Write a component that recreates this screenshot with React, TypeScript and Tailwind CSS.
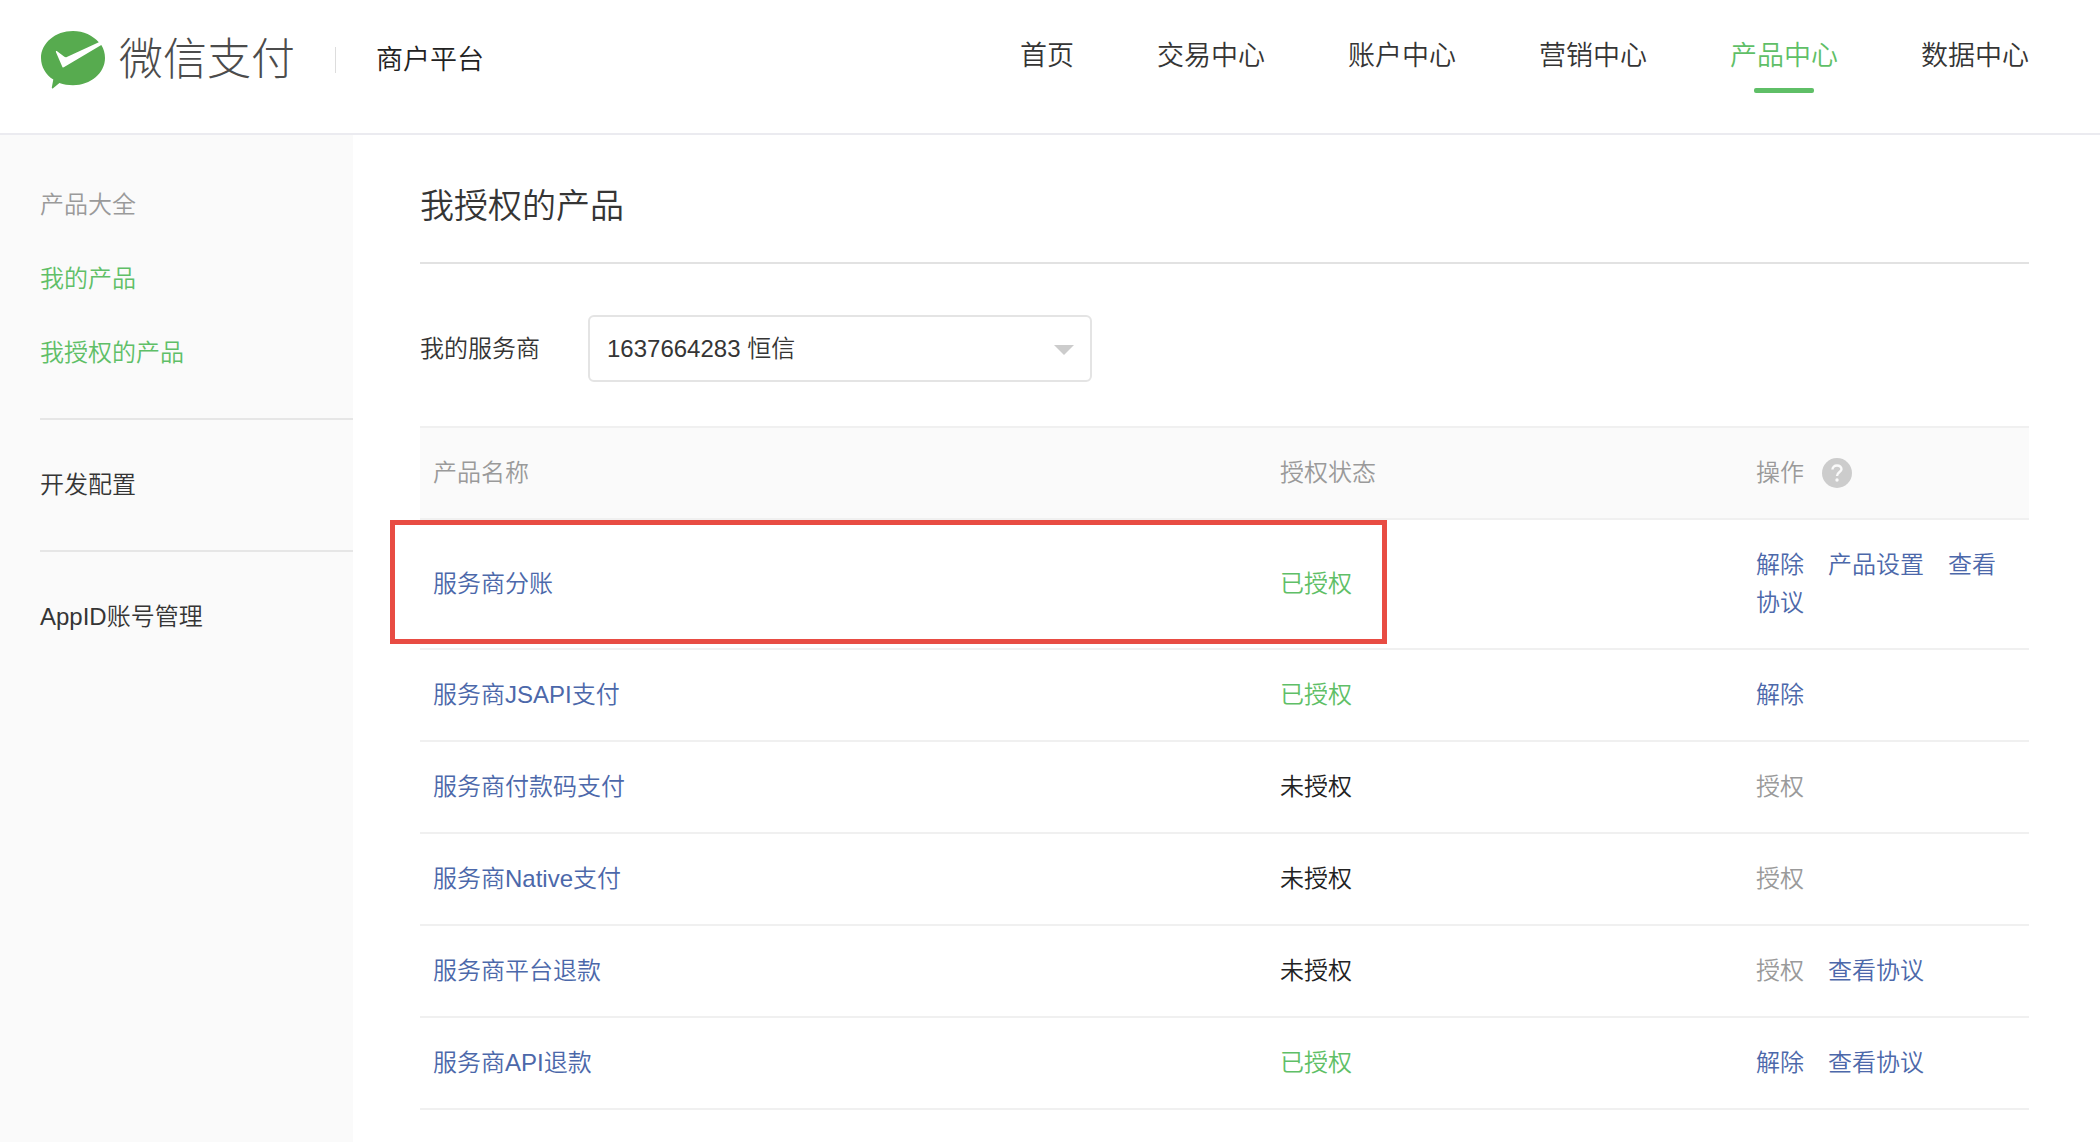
import { useState } from 'react';

type Action = { label: string; disabled?: boolean };

type Product = {
  name: string;
  authorized: boolean;
  actions: Action[];
  highlighted?: boolean;
};

const navItems = ['首页', '交易中心', '账户中心', '营销中心', '产品中心', '数据中心'];

const products: Product[] = [
  {
    name: '服务商分账',
    authorized: true,
    actions: [{ label: '解除' }, { label: '产品设置' }, { label: '查看协议' }],
    highlighted: true,
  },
  { name: '服务商JSAPI支付', authorized: true, actions: [{ label: '解除' }] },
  { name: '服务商付款码支付', authorized: false, actions: [{ label: '授权', disabled: true }] },
  { name: '服务商Native支付', authorized: false, actions: [{ label: '授权', disabled: true }] },
  {
    name: '服务商平台退款',
    authorized: false,
    actions: [{ label: '授权', disabled: true }, { label: '查看协议' }],
  },
  {
    name: '服务商API退款',
    authorized: true,
    actions: [{ label: '解除' }, { label: '查看协议' }],
  },
];

function Logo() {
  return (
    <svg width="65" height="58" viewBox="0 0 65 58" aria-hidden="true">
      <path
        d="M32 0C14.300 0 0 12.100 0 27c0 9 4.800 16.800 12.300 21.600L10.800 56.500c-.1 1 .6 1.300 1.300.8L18.400 52c4.200 1.500 8.900 2.200 13.600 2.200 17.700 0 32-12.200 32-27.200 0-4.700-1.200-9.100-3.700-13L22.800 36.300c-.6.3-1.100.2-1.400-.4L15 21.300c-.4-1 .3-1.500 1.100-1l7.300 5.400c.8.5 1.500.6 2.400.2L57.800 11.300C51.900 4.500 42.500 0 32 0z"
        fill="#57ab4f"
      />
    </svg>
  );
}

function Header() {
  return (
    <header className="flex h-[135px] items-start justify-between border-b-2 border-[#ebebf0] pr-[71px] pl-[41px]">
      <div className="flex items-center pt-[31px]">
        <a href="#" className="flex items-center gap-[13px]">
          <Logo />
          <span className="text-[44px] leading-[56px] font-light text-[#4c4c4c]">微信支付</span>
        </a>
        <span className="ml-10 h-[26px] w-px bg-[#dddddd]" />
        <span className="ml-10 text-[27px] leading-[56px] text-[#222222]">商户平台</span>
      </div>

      <nav className="flex gap-[83px] pt-9">
        {navItems.map((item) => {
          const active = item === '产品中心';
          return (
            <a
              key={item}
              href="#"
              className={`flex flex-col items-center gap-[12px] text-[27px] leading-10 whitespace-nowrap ${
                active ? 'text-[#5fbf67]' : 'text-[#353535]'
              }`}
            >
              {item}
              {active && <span className="h-[5px] w-[60px] rounded-xs bg-[#5fbf67]" />}
            </a>
          );
        })}
      </nav>
    </header>
  );
}

function Sidebar() {
  return (
    <aside className="w-[353px] shrink-0 bg-[#fafafa] pt-[5px] pl-10 leading-[74px]">
      <div className="border-b-2 border-[#e6e6e6] py-7">
        <p className="text-[#9a9a9a]">产品大全</p>
        <a href="#" className="block text-[#5fbf67]">我的产品</a>
        <a href="#" className="block text-[#5fbf67]">我授权的产品</a>
      </div>
      <div className="border-b-2 border-[#e6e6e6] py-7">
        <a href="#" className="block">开发配置</a>
      </div>
      <div className="py-7">
        <a href="#" className="block">AppID账号管理</a>
      </div>
    </aside>
  );
}

function ProductTable() {
  return (
    <table className="mt-[44px] w-full table-fixed border-separate border-spacing-0 text-left leading-[38px]">
      <thead className="bg-[#fafafa] text-[#9a9a9a]">
        <tr>
          <th className="border-y-2 border-[#f0f0f0] px-[13px] py-[26px] font-[350]">产品名称</th>
          <th className="w-[476px] border-y-2 border-[#f0f0f0] px-[13px] py-[26px] font-[350]">授权状态</th>
          <th className="w-[286px] border-y-2 border-[#f0f0f0] px-[13px] py-[26px] font-[350]">
            <div className="flex items-center gap-[18px]">
              操作
              <button
                type="button"
                aria-label="帮助"
                className="flex size-[30px] items-center justify-center rounded-full bg-[#cccccc]"
              >
                <svg width="14" height="18" viewBox="0 0 14 18" fill="none" aria-hidden="true">
                  <path
                    d="M2.500 5.500C2.500 3 4.400 1.500 7 1.500s4.500 1.500 4.500 3.800C11.500 8 7 8.200 7 12"
                    stroke="#fafafa"
                    strokeWidth="2.400"
                  />
                  <circle cx="7" cy="16" r="1.700" fill="#fafafa" />
                </svg>
              </button>
            </div>
          </th>
        </tr>
      </thead>
      <tbody>
        {products.map((product) => (
          <tr key={product.name} className="relative">
            <td className="border-b-2 border-[#f0f0f0] px-[13px] py-[26px]">
              <a href="#" className="text-[#4c68aa]">{product.name}</a>
              {/* Marco rojo que resalta la fila */}
              {product.highlighted && (
                <span className="pointer-events-none absolute top-0 right-[642px] bottom-[6px] -left-[30px] border-5 border-[#e84c43]" />
              )}
            </td>
            <td
              className={`border-b-2 border-[#f0f0f0] px-[13px] py-[26px] ${
                product.authorized ? 'text-[#5fbf67]' : 'text-[#222222]'
              }`}
            >
              {product.authorized ? '已授权' : '未授权'}
            </td>
            <td className="border-b-2 border-[#f0f0f0] px-[13px] py-[26px]">
              {product.actions.map((action) => (
                <a
                  key={action.label}
                  href="#"
                  className={`mr-6 last:mr-0 ${action.disabled ? 'text-[#9a9a9a]' : 'text-[#4c68aa]'}`}
                >
                  {action.label}
                </a>
              ))}
            </td>
          </tr>
        ))}
      </tbody>
    </table>
  );
}

export default function App() {
  const [provider, setProvider] = useState('1637664283');

  return (
    <div className="flex min-h-screen flex-col bg-white font-['Liberation_Sans','Noto_Sans_CJK_SC',sans-serif] text-[24px] font-[350] text-[#353535]">
      <Header />
      <div className="flex flex-1">
        <Sidebar />
        <main className="min-w-0 flex-1 pt-[46px] pr-[71px] pl-[67px]">
          <h1 className="border-b-2 border-[#e2e2e2] pb-[31px] text-[34px] leading-[50px] font-[350]">我授权的产品</h1>

          <div className="mt-[51px] flex items-center gap-[48px]">
            <label htmlFor="provider">我的服务商</label>
            <div className="relative w-[504px]">
              <select
                id="provider"
                value={provider}
                onChange={(e) => setProvider(e.target.value)}
                className="h-[67px] w-full appearance-none rounded-md border-2 border-[#e4e4e4] bg-white px-[17px]"
              >
                <option value="1637664283">1637664283 恒信</option>
              </select>
              <svg
                className="pointer-events-none absolute top-[30px] right-[18px]"
                width="20"
                height="10"
                viewBox="0 0 20 10"
                aria-hidden="true"
              >
                <path d="M0 0h20L10 10z" fill="#cccccc" />
              </svg>
            </div>
          </div>

          <ProductTable />
        </main>
      </div>
    </div>
  );
}
